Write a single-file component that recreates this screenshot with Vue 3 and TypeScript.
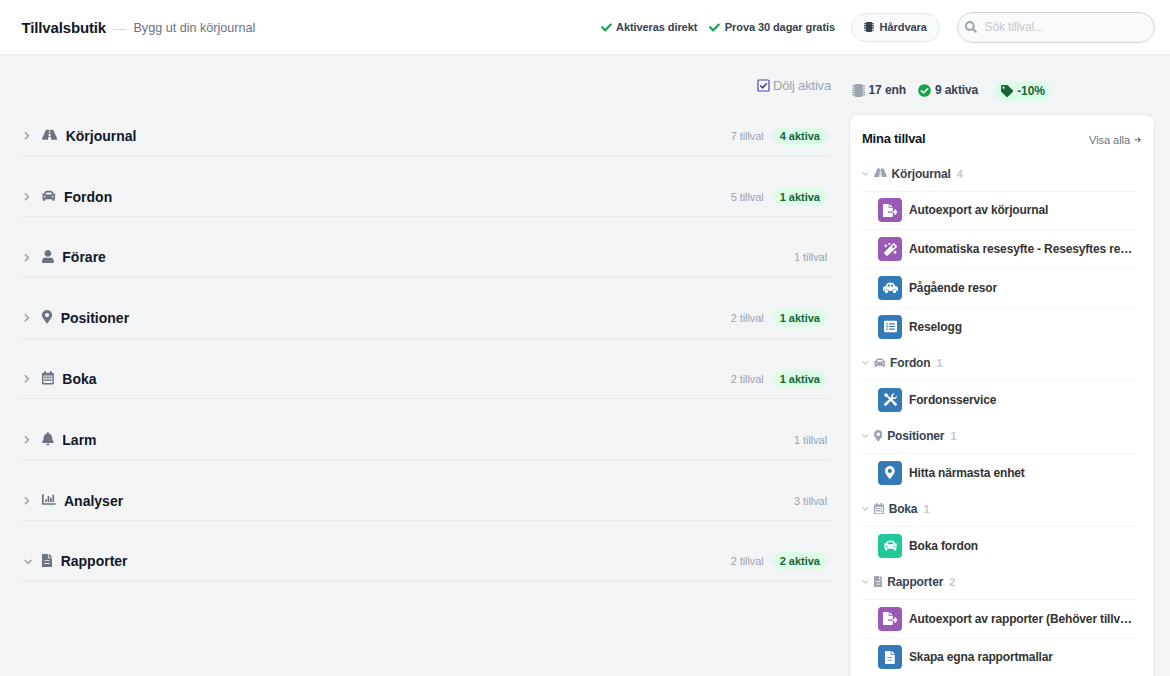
<script setup lang="ts">
import { h, type FunctionalComponent } from 'vue'

interface IconDef { w: number; d: string }

const icons: Record<string, IconDef> = {
  check: { w: 512, d: 'M173.898 439.404l-166.4-166.4c-9.997-9.997-9.997-26.206 0-36.204l36.203-36.204c9.997-9.998 26.207-9.998 36.204 0L192 312.69 432.095 72.596c9.997-9.997 26.207-9.997 36.204 0l36.203 36.204c9.997 9.997 9.997 26.206 0 36.204l-294.4 294.401c-9.998 9.997-26.207 9.997-36.204-.001z' },
  road: { w: 576, d: 'M573.19 402.67l-139.79-320C428.43 71.29 417.6 64 405.68 64h-97.59l2.45 23.16c.5 4.72-3.21 8.84-7.96 8.84h-29.16c-4.75 0-8.46-4.12-7.96-8.84L267.91 64h-97.59c-11.93 0-22.76 7.29-27.73 18.67L2.8 402.67C-6.45 423.86 8.31 448 30.54 448h196.84l10.31-97.68c.86-8.14 7.72-14.32 15.91-14.32h68.8c8.19 0 15.05 6.18 15.91 14.32L348.62 448h196.84c22.23 0 36.99-24.14 27.73-45.33zM260.4 135.16a8 8 0 0 1 7.96-7.16h39.29c4.09 0 7.53 3.09 7.96 7.16l4.6 43.58c.75 7.09-4.81 13.26-11.93 13.26h-40.54c-7.13 0-12.68-6.17-11.93-13.26l4.59-43.58zM315.64 304h-55.29c-9.5 0-16.91-8.23-15.91-17.68l5.07-48c.86-8.14 7.72-14.32 15.91-14.32h45.15c8.19 0 15.05 6.18 15.91 14.32l5.07 48c1 9.45-6.41 17.68-15.91 17.68z' },
  car: { w: 512, d: 'M499.99 176h-59.87l-16.64-41.6C406.38 91.63 365.57 64 319.5 64h-127c-46.06 0-86.88 27.63-103.99 70.4L71.87 176H12.01C4.2 176-1.53 183.34.37 190.91l6 24C7.7 220.25 12.5 224 18.01 224h20.07C24.65 235.73 16 252.78 16 272v48c0 16.12 6.16 30.67 16 41.93V416c0 17.67 14.33 32 32 32h32c17.67 0 32-14.33 32-32v-32h256v32c0 17.67 14.33 32 32 32h32c17.67 0 32-14.33 32-32v-54.07c9.84-11.25 16-25.8 16-41.93v-48c0-19.22-8.65-36.27-22.07-48H494c5.51 0 10.31-3.75 11.64-9.09l6-24c1.89-7.57-3.84-14.91-11.65-14.91zm-352.06-17.83c7.29-18.22 24.94-30.17 44.57-30.17h127c19.63 0 37.28 11.95 44.57 30.17L384 208H128l19.93-49.83zM96 319.8c-19.2 0-32-12.76-32-31.9S76.8 256 96 256s48 28.71 48 47.85-28.8 15.95-48 15.95zm320 0c-19.2 0-48 3.19-48-15.95S396.8 256 416 256s32 12.76 32 31.9-12.8 31.9-32 31.9z' },
  user: { w: 448, d: 'M224 256c70.7 0 128-57.3 128-128S294.7 0 224 0 96 57.3 96 128s57.3 128 128 128zm89.6 32h-16.7c-22.2 10.2-46.9 16-72.9 16s-50.6-5.8-72.9-16h-16.7C60.2 288 0 348.2 0 422.4V464c0 26.5 21.5 48 48 48h352c26.5 0 48-21.5 48-48v-41.6c0-74.2-60.2-134.4-134.4-134.4z' },
  pin: { w: 384, d: 'M172.268 501.67C26.97 291.031 0 269.413 0 192 0 85.961 85.961 0 192 0s192 85.961 192 192c0 77.413-26.97 99.031-172.268 309.67-9.535 13.774-29.93 13.773-39.464 0zM192 272c44.183 0 80-35.817 80-80s-35.817-80-80-80-80 35.817-80 80 35.817 80 80 80z' },
  calendar: { w: 448, d: 'M400 64h-40V12c0-7-5-12-12-12h-36c-7 0-12 5-12 12v52H148V12c0-7-5-12-12-12h-36c-7 0-12 5-12 12v52H48C21 64 0 85 0 112v352c0 27 21 48 48 48h352c27 0 48-21 48-48V112c0-27-21-48-48-48zM56 168h336v288H56zM88 208h76v64H88zM186 208h76v64h-76zM284 208h76v64h-76zM88 312h76v64H88zM186 312h76v64h-76zM284 312h76v64h-76z' },
  bell: { w: 448, d: 'M224 512c35.32 0 63.97-28.65 63.97-64H160.03c0 35.35 28.65 64 63.97 64zm215.39-149.71c-19.32-20.76-55.47-51.99-55.47-154.29 0-77.7-54.48-139.9-127.94-155.16V32c0-17.67-14.32-32-31.98-32s-31.98 14.33-31.98 32v20.84C118.56 68.1 64.08 130.3 64.08 208c0 102.3-36.15 133.53-55.47 154.29-6 6.45-8.66 14.16-8.61 21.71.11 16.4 12.98 32 32.1 32h383.8c19.12 0 32-15.6 32.1-32 .05-7.55-2.61-15.27-8.61-21.71z' },
  chart: { w: 512, d: 'M12 48h40c7 0 12 5 12 12v324h436c7 0 12 5 12 12v40c0 7-5 12-12 12H16c-9 0-16-7-16-16V60c0-7 5-12 12-12zM124 240h62v104h-62zM214 112h62v232h-62zM304 176h62v168h-62zM396 64h62v280h-62z' },
  file: { w: 384, d: 'M224 136V0H24C10.7 0 0 10.7 0 24v464c0 13.3 10.7 24 24 24h336c13.3 0 24-10.7 24-24V160H248c-13.2 0-24-10.8-24-24zM96 236h192v34H96zM96 340h192v36H96zM384 121.9v6.1H256V0h6.1c6.4 0 12.5 2.5 17 7l97.9 98c4.5 4.5 7 10.6 7 16.9z' },
  chip: { w: 512, d: 'M144 0h224c27 0 48 21 48 48v416c0 27-21 48-48 48H144c-27 0-48-21-48-48V48c0-27 21-48 48-48zM0 60h96v44H0zM0 146h96v44H0zM0 232h96v44H0zM0 318h96v44H0zM0 404h96v44H0zM416 60h96v44h-96zM416 146h96v44h-96zM416 232h96v44h-96zM416 318h96v44h-96zM416 404h96v44h-96z' },
  search: { w: 512, d: 'M505 442.7L405.3 343c-4.5-4.5-10.6-7-17-7H372c27.6-35.3 44-79.7 44-128C416 93.1 322.9 0 208 0S0 93.1 0 208s93.1 208 208 208c48.3 0 92.7-16.4 128-44v16.3c0 6.4 2.5 12.5 7 17l99.7 99.7c9.4 9.4 24.6 9.4 33.9 0l28.3-28.3c9.4-9.4 9.4-24.6.1-34zM208 336c-70.7 0-128-57.2-128-128 0-70.7 57.2-128 128-128 70.7 0 128 57.2 128 128 0 70.7-57.2 128-128 128z' },
  tag: { w: 512, d: 'M0 252.118V48C0 21.49 21.49 0 48 0h204.118a48 48 0 0 1 33.941 14.059l211.882 211.882c18.745 18.745 18.745 49.137 0 67.882L293.823 497.941c-18.745 18.745-49.137 18.745-67.882 0L14.059 286.059A48 48 0 0 1 0 252.118zM112 64c-26.51 0-48 21.49-48 48s21.49 48 48 48 48-21.49 48-48-21.49-48-48-48z' },
  checkCircle: { w: 512, d: 'M504 256c0 136.967-111.033 248-248 248S8 392.967 8 256 119.033 8 256 8s248 111.033 248 248zM227.314 387.314l184-184c6.248-6.248 6.248-16.379 0-22.627l-22.627-22.627c-6.248-6.249-16.379-6.249-22.628 0L216 308.118l-70.059-70.059c-6.248-6.248-16.379-6.248-22.628 0l-22.627 22.627c-6.248 6.248-6.248 16.379 0 22.627l104 104c6.249 6.249 16.379 6.249 22.628.001z' },
  export: { w: 576, d: 'M384 128L256 0v128zM571 308l-95.7-96.4c-10.1-10.1-27.4-3-27.4 11.3V288h-64v64h64v65.2c0 14.3 17.3 21.4 27.4 11.3L571 332c6.6-6.6 6.6-17.4 0-24zM192 344v-48h192V160H248c-13.2 0-24-10.8-24-24V0H24C10.7 0 0 10.7 0 24v464c0 13.3 10.7 24 24 24h336c13.3 0 24-10.7 24-24V344z' },
  magic: { w: 512, d: 'M210 100l22-44 44-22-44-22-16-34-30 34-36 22 36 22zM70 190l24-54 54-24-54-24L70 34 46 88-8 112l54 24zM436 280l-27 57-57 27 57 27 27 57 27-57 57-27-57-27zM502 110L432 30C420 18 404 12 390 12s-26 6-36 16L14 360c-16 16-16 42 0 58l72 72c16 16 42 16 58 0L500 168c16-16 16-42 2-58zM366 214l-54-54 78-78 54 54z' },
  carSide: { w: 640, d: 'M568 196h-28L452 66c-12-20-32-34-58-34H236c-26 0-46 14-58 34L100 196H72C32 196 0 226 0 264v72c0 24 18 44 42 46 4-54 48-98 104-98s100 44 104 98h140c4-54 48-98 104-98s100 44 104 98c24-2 42-22 42-46v-72c0-38-32-68-72-68zM176 196l54-92h66v92zM348 196v-92h54l60 92zM146 312a80 80 0 1 0 0 160 80 80 0 1 0 0-160zM494 312a80 80 0 1 0 0 160 80 80 0 1 0 0-160z' },
  list: { w: 512, d: 'M464 480H48c-27 0-48-21-48-48V80c0-27 21-48 48-48h416c27 0 48 21 48 48v352c0 27-21 48-48 48zM88 124v56h60v-56zM88 228v56h60v-56zM88 332v56h60v-56zM196 128v48h224v-48zM196 232v48h224v-48zM196 336v48h224v-48z' },
  tools: { w: 512, d: 'M64 0L0 64l56 96h64l82 82L24 404c-26 24-28 60-4 84s60 22 84-4l150-160 28-4 128 160c24 26 58 28 82 4s22-58-4-82L332 262l34-22c38 8 78-2 108-32 30-28 42-68 36-106l-78 76-72-14-14-72 76-76c-38-8-78 4-108 34-26 26-36 64-32 98l-40 40-78-78V56z' },
  arrow: { w: 512, d: 'M288 64l198 174c10 10 10 26 0 36L288 448l-48-54 100-102H26v-72h314L240 118z' },
  chevRight: { w: 320, d: 'M18 98l58-60 206 202c9 9 9 23 0 32L76 474l-58-60 158-158z' },
  chevDown: { w: 448, d: 'M8 190l58-58 158 158 158-158 58 58-200 200c-9 9-23 9-32 0z' },
}

const Icon: FunctionalComponent<{ name: string; size: number }> = (p) => {
  const i = icons[p.name]
  return h('svg', { viewBox: `0 0 ${i.w} 512`, width: (i.w / 512) * p.size, height: p.size, fill: 'currentColor', 'fill-rule': 'evenodd', 'aria-hidden': 'true' }, [h('path', { d: i.d })])
}
Icon.props = ['name', 'size']

const categories = [
  { name: 'Körjournal', icon: 'road', count: 7, active: 4 },
  { name: 'Fordon', icon: 'car', count: 5, active: 1 },
  { name: 'Förare', icon: 'user', count: 1, active: 0 },
  { name: 'Positioner', icon: 'pin', count: 2, active: 1 },
  { name: 'Boka', icon: 'calendar', count: 2, active: 1 },
  { name: 'Larm', icon: 'bell', count: 1, active: 0 },
  { name: 'Analyser', icon: 'chart', count: 3, active: 0 },
  { name: 'Rapporter', icon: 'file', count: 2, active: 2, open: true },
]

const groups = [
  { name: 'Körjournal', icon: 'road', items: [
    { name: 'Autoexport av körjournal', icon: 'export', tone: 'purple' },
    { name: 'Automatiska resesyfte - Resesyftes re…', icon: 'magic', tone: 'purple' },
    { name: 'Pågående resor', icon: 'carSide', tone: 'blue' },
    { name: 'Reselogg', icon: 'list', tone: 'blue' },
  ] },
  { name: 'Fordon', icon: 'car', items: [{ name: 'Fordonsservice', icon: 'tools', tone: 'blue' }] },
  { name: 'Positioner', icon: 'pin', items: [{ name: 'Hitta närmasta enhet', icon: 'pin', tone: 'blue' }] },
  { name: 'Boka', icon: 'calendar', items: [{ name: 'Boka fordon', icon: 'car', tone: 'green' }] },
  { name: 'Rapporter', icon: 'file', items: [
    { name: 'Autoexport av rapporter (Behöver tillv…', icon: 'export', tone: 'purple' },
    { name: 'Skapa egna rapportmallar', icon: 'file', tone: 'blue' },
  ] },
]
</script>

<template>
  <div class="page">
    <header class="topbar">
      <h1>Tillvalsbutik</h1>
      <span class="dash"></span>
      <span class="sub">Bygg ut din körjournal</span>
      <div class="perks">
        <span class="perk"><Icon name="check" :size="11" /><b>Aktiveras direkt</b></span>
        <span class="perk"><Icon name="check" :size="11" /><b>Prova 30 dagar gratis</b></span>
      </div>
      <button class="hardware"><Icon name="chip" :size="10" /><span>Hårdvara</span></button>
      <label class="search"><Icon name="search" :size="12" /><input type="text" placeholder="Sök tillval..." /></label>
    </header>

    <div class="body">
      <main>
        <div class="filter">
          <svg width="13" height="13" viewBox="0 0 13 13" fill="none"><rect x="1" y="1" width="11" height="11" rx="1" fill="#fff" stroke="#3f46b5" stroke-width="1.2" /><path d="M3.3 6.5l2.300 2.300 4.200-4.600" stroke="#2f3aa8" stroke-width="1.5" /></svg>
          <span>Dölj aktiva</span>
        </div>
        <section v-for="c in categories" :key="c.name" class="category">
          <span class="chev"><Icon :name="c.open ? 'chevDown' : 'chevRight'" :size="9.5" /></span>
          <Icon class="cat-icon" :name="c.icon" :size="13.5" />
          <h2>{{ c.name }}</h2>
          <span class="count">{{ c.count }} tillval</span>
          <span v-if="c.active" class="badge">{{ c.active }} aktiva</span>
        </section>
      </main>

      <aside>
        <div class="stats">
          <span class="stat units"><Icon name="chip" :size="13" />17 enh</span>
          <span class="stat active"><Icon name="checkCircle" :size="13" />9 aktiva</span>
          <span class="discount"><Icon name="tag" :size="12" />-10%</span>
        </div>
        <div class="card">
          <div class="card-head">
            <h3>Mina tillval</h3>
            <a>Visa alla <Icon name="arrow" :size="7.5" /></a>
          </div>
          <div v-for="g in groups" :key="g.name" class="group">
            <div class="group-head">
              <Icon class="gchev" name="chevDown" :size="7.5" />
              <Icon class="gicon" :name="g.icon" :size="11.5" />
              <span class="gname">{{ g.name }}</span>
              <span class="gcount">{{ g.items.length }}</span>
            </div>
            <div v-for="i in g.items" :key="i.name" class="item">
              <span class="tile" :class="i.tone"><Icon :name="i.icon" :size="i.icon === 'carSide' ? 12 : 13" /></span>
              <span class="iname">{{ i.name }}</span>
            </div>
          </div>
        </div>
      </aside>
    </div>
  </div>
</template>

<style>
body { margin: 0; background: #f3f4f6; }
</style>

<style scoped>
.page {
  width: 1170px;
  height: 676px;
  overflow: hidden;
  background: #f3f4f6;
  color: #111827;
  font-family: "Liberation Sans", Arial, sans-serif;
}
.page * { box-sizing: border-box; }
svg { display: block; flex: none; }
h1, h2, h3 { margin: 0; white-space: nowrap; }
.topbar {
  display: flex;
  align-items: center;
  height: 55px;
  padding: 0 15px 0 21.5px;
  background: #fff;
  border-bottom: 1px solid #e5e7eb;
  white-space: nowrap;
}
h1 { font-size: 15px; line-height: 20px; letter-spacing: -0.15px; padding-top: 1px; }
.dash { width: 13px; height: 1px; margin: 4px 7px 0 7.5px; background: #d1d5db; }
.sub { font-size: 12.6px; color: #6b7280; padding-top: 2px; }
.perks { display: flex; gap: 12px; margin-left: auto; margin-right: 16px; }
.perk { display: flex; align-items: center; gap: 4.5px; color: #16a34a; }
.perk b { font-size: 11px; color: #374151; letter-spacing: -0.08px; }
.hardware {
  display: flex;
  align-items: center;
  justify-content: center;
  gap: 5.5px;
  width: 89px;
  height: 29px;
  margin: 0 17px 0 0;
  padding: 0;
  border: 1px solid #e5e7eb;
  border-radius: 15px;
  background: #f9fafb;
  color: #374151;
  font: bold 11px "Liberation Sans", Arial, sans-serif;
  letter-spacing: -0.05px;
}
.search {
  display: flex;
  align-items: center;
  gap: 7.5px;
  width: 198px;
  height: 31px;
  padding: 0 7px;
  border: 1px solid #d1d5db;
  border-radius: 16px;
  background: #f9fafb;
  color: #9ca3af;
}
.search input {
  min-width: 0;
  width: 100%;
  padding: 0;
  border: 0;
  outline: 0;
  background: transparent;
  font: 12px "Liberation Sans", Arial, sans-serif;
  letter-spacing: -0.1px;
}
.search input::placeholder { color: #c4c8cf; opacity: 1; }
.body { display: grid; grid-template-columns: 810px 306px; gap: 18px; padding-left: 21px; }
.filter {
  display: flex;
  align-items: center;
  justify-content: flex-end;
  gap: 3px;
  height: 20px;
  margin-top: 20.5px;
  font-size: 13px;
  letter-spacing: -0.18px;
  color: #9ca3af;
}
.category {
  display: flex;
  align-items: center;
  height: 40.8px;
  margin-top: 20px;
  padding: 1px 4px 0 3px;
  border-bottom: 1px solid #e5e7eb;
}
.filter + .category { margin-top: 19.9px; }
.chev { width: 18px; color: #9ca3af; }
.cat-icon { color: #6b7280; margin-right: 8.5px; position: relative; top: -1px; }
h2 { font-size: 14px; line-height: 20px; }
.count { margin-left: auto; font-size: 11px; color: #9ca3af; letter-spacing: -0.08px; }
.badge {
  margin-left: 9px;
  padding: 0 7px;
  height: 18px;
  line-height: 18px;
  border-radius: 9px;
  background: #dcfce7;
  color: #166534;
  font-size: 11px;
  font-weight: bold;
}
.stats { display: flex; align-items: center; height: 20px; margin-top: 25px; padding-left: 2.5px; font-size: 12px; font-weight: bold; letter-spacing: -0.1px; color: #374151; white-space: nowrap; }
.stat { display: flex; align-items: center; gap: 4px; margin-right: 12px; }
.units svg { color: #9ca3af; }
.active svg { color: #16a34a; }
.discount {
  display: flex;
  align-items: center;
  gap: 4px;
  height: 20px;
  margin: 2px 0 0 4px;
  padding: 0 7px;
  border-radius: 10px;
  background: #dcfce7;
  color: #166534;
}
.card {
  height: 640px;
  margin-top: 14px;
  padding: 0 12px;
  background: #fff;
  border: 1px solid #e5e7eb;
  border-radius: 9px;
}
.card-head { display: flex; align-items: center; justify-content: space-between; height: 42.35px; padding-top: 5px; }
h3 { font-size: 13px; letter-spacing: -0.25px; }
.card-head a { display: flex; align-items: center; gap: 3.5px; padding: 3px 1px 0 0; font-size: 11px; color: #6b7280; letter-spacing: -0.05px; }
.group { width: 275px; }
.group-head {
  display: flex;
  align-items: center;
  height: 34.25px;
  padding-bottom: 0.6px;
  border-bottom: 1px solid #f3f4f6;
  font-size: 12px;
  font-weight: bold;
  letter-spacing: -0.15px;
  color: #374151;
}
.gchev { color: #c3c8d0; margin-right: 5px; }
.gicon { color: #9ca3af; margin-right: 5px; position: relative; top: -0.5px; }
.gcount { margin-left: 6px; font-size: 11px; color: #c5c9d0; }
.item { display: flex; align-items: center; height: 38.75px; padding-left: 16px; border-bottom: 1px solid #f3f4f6; }
.item:last-child { border-color: transparent; }
.tile { display: flex; align-items: center; justify-content: center; flex: none; width: 24px; height: 24px; margin-right: 7px; border-radius: 4px; color: #fff; }
.purple { background: #9b59b6; }
.blue { background: #337ab7; }
.green { background: #20c997; }
.iname { flex: 1; min-width: 0; white-space: nowrap; font-size: 12px; font-weight: bold; letter-spacing: -0.15px; color: #333; }
</style>
